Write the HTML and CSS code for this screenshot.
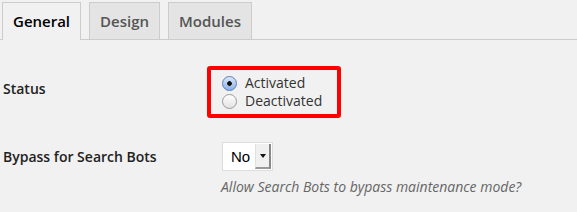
FILE: index.html
```html
<!DOCTYPE html>
<html lang="en">
<head>
    <meta charset="UTF-8">
    <title>Maintenance Settings</title>
    <link rel="stylesheet" href="styles.css">
</head>
<body>
<div class="tabs">
    <a class="tab tab-active" href="#">General</a>
    <a class="tab" href="#">Design</a>
    <a class="tab" href="#">Modules</a>
</div>

<div class="form">
    <div class="row row-status">
        <div class="label">Status</div>
        <div class="field">
            <div class="highlight">
                <label class="radio"><input type="radio" name="status" checked> Activated</label>
                <label class="radio"><input type="radio" name="status"> Deactivated</label>
            </div>
        </div>
    </div>

    <div class="row row-bots">
        <div class="label label-bots">Bypass for Search Bots</div>
        <div class="field">
            <div class="select">
                <span class="select-value">No</span>
                <span class="select-arrow"></span>
            </div>
            <p class="description">Allow Search Bots to bypass maintenance mode?</p>
        </div>
    </div>
</div>
</body>
</html>
```

FILE: styles.css
```css
body {
    margin: 0;
    padding-top: 2px;
    background: #f1f1f1;
    font-family: "Open Sans", "Liberation Sans", sans-serif;
    color: #222;
    font-size: 14px;
}

/* tabs */
.tabs {
    display: flex;
    gap: 8px;
    padding-left: 2px;
    border-bottom: 1px solid #ccc;
}
.tab {
    display: block;
    padding: 6px 10px;
    line-height: 24px;
    font-size: 15px;
    font-weight: 600;
    color: #555;
    text-decoration: none;
    background: #e4e4e4;
    border: 1px solid #ccc;
    border-bottom: none;
}
.tab-active {
    color: #000;
    background: #f1f1f1;
    margin-bottom: -1px;
    padding-bottom: 7px;
}

/* rows */
.row {
    display: grid;
    grid-template-columns: 219px 1fr;
    padding-left: 3px;
}
.row-status {
    padding-top: 26px;
}
.row-bots {
    padding-top: 24px;
}
.label {
    font-weight: 600;
    line-height: 20px;
    padding-top: 13px;
}
.label-bots {
    padding-top: 5px;
}

/* red annotation box */
.highlight {
    display: inline-block;
    margin-left: -15px;
    padding: 4px 15px 4px 11px;
    border: 4px solid #f00;
    border-radius: 3px;
}
.radio {
    display: flex;
    align-items: center;
    line-height: 18px;
    color: #333;
}
.radio input {
    appearance: none;
    -webkit-appearance: none;
    width: 15px;
    height: 15px;
    margin: 0 8px 0 0;
    border-radius: 50%;
    border: 1px solid #9a9a9a;
    background: linear-gradient(#fff, #e2e2e2);
}
.radio input:checked {
    border-color: #5a7fb8;
    background: radial-gradient(circle, #111 0 2px, transparent 2.6px), linear-gradient(#d9e7fa, #8cb1e8);
}

/* fake select */
.select {
    display: flex;
    align-items: stretch;
    width: 51px;
    height: 29px;
    box-sizing: border-box;
    border: 1px solid #ddd;
    background: #fff;
    padding: 1px 1px 1px 0;
}
.select-value {
    flex: 1;
    padding-left: 8px;
    line-height: 26px;
    font-family: "Liberation Sans", Arial, sans-serif;
    font-size: 15px;
    color: #000;
}
.select-arrow {
    width: 13px;
    background: #f0f0f0;
    border-right: 2px solid #888;
    border-bottom: 2px solid #999;
    border-left: 1px solid #e0e0e0;
    position: relative;
}
.select-arrow::after {
    content: "";
    position: absolute;
    left: 4px;
    top: 10px;
    border-left: 3px solid transparent;
    border-right: 3px solid transparent;
    border-top: 4px solid #111;
}
.description {
    margin: 6px 0 0 -1px;
    font-size: 14px;
    line-height: 20px;
    font-style: italic;
    color: #666;
}
```
